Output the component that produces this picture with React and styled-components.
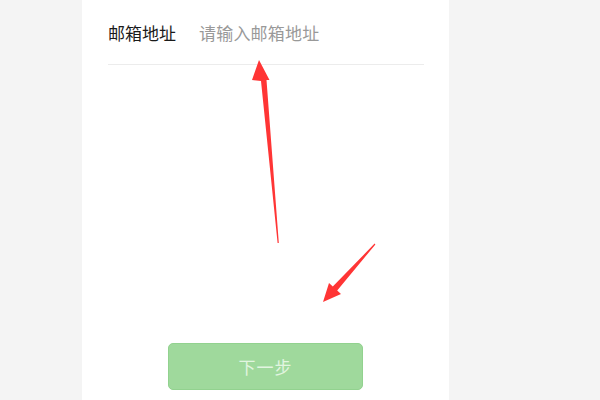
import React from "react";
import styled, { createGlobalStyle } from "styled-components";

const GlobalStyle = createGlobalStyle`
  html, body {
    margin: 0;
    padding: 0;
    background: #f4f4f4;
    font-family: "Noto Sans CJK SC", "Noto Sans", sans-serif;
  }
`;

const Page = styled.div`
  position: relative;
  width: 600px;
  height: 400px;
  overflow: hidden;
`;

const Panel = styled.div`
  display: flex;
  flex-direction: column;
  margin-left: 82px;
  width: 367px;
  height: 400px;
  background: #ffffff;
`;

const Row = styled.div`
  display: flex;
  align-items: center;
  height: 65px;
  margin: 0 25px 0 26px;
  border-bottom: 1px solid #ececec;
  box-sizing: border-box;
`;

const Label = styled.span`
  width: 91px;
  flex-shrink: 0;
  font-size: 17px;
  color: #1a1a1a;
`;

const Input = styled.input`
  flex: 1;
  min-width: 0;
  border: none;
  outline: none;
  padding: 0;
  background: transparent;
  font-family: inherit;
  font-size: 17px;
  color: #333;

  &::placeholder {
    color: #999999;
    letter-spacing: 0.2px;
  }
`;

const Spacer = styled.div`
  flex: 1;
`;

const NextButton = styled.button`
  align-self: center;
  width: 195px;
  height: 47px;
  margin-bottom: 10px;
  border: 1px solid #92d28f;
  border-radius: 5px;
  background: #9fd99c;
  color: #e2f5e0;
  font-family: inherit;
  font-size: 17px;
  letter-spacing: 1px;
`;

const Arrows = styled.svg`
  position: absolute;
  left: 0;
  top: 0;
  pointer-events: none;
`;

const App = () => {
  return (
    <Page>
      <GlobalStyle />
      <Panel>
        <Row>
          <Label>邮箱地址</Label>
          <Input placeholder="请输入邮箱地址" />
        </Row>
        <Spacer />
        <NextButton disabled>下一步</NextButton>
      </Panel>
      <Arrows width="600" height="400" viewBox="0 0 600 400">
        <polygon
          fill="#ff3535"
          points="259,60 269.5,80 266.5,80 278.8,243 277.6,243 261,81 252,80"
        />
        <polygon
          fill="#ff3535"
          points="323,302 329,283 332.8,286.6 374.6,243.6 375.4,244.4 337.2,290.6 341,294"
        />
      </Arrows>
    </Page>
  );
};

export default App;
